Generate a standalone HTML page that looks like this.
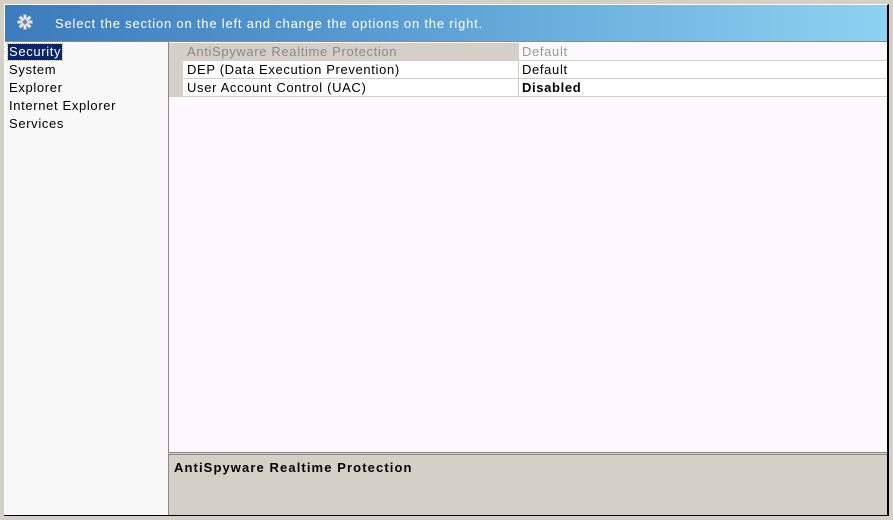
<!DOCTYPE html>
<html><head><meta charset="utf-8"><style>
*{margin:0;padding:0;box-sizing:border-box}
body{width:893px;height:520px;background:#d4d0c8;position:relative;overflow:hidden;font-family:"Liberation Sans","Noto Sans CJK JP",sans-serif;font-size:13px;color:#000;letter-spacing:0.65px}
.win{position:absolute;left:4px;top:4px;width:885px;height:512px;border-left:1px solid #fff;border-top:1px solid #fff;border-right:2px solid #000;border-bottom:2px solid #000;background:#f8f8f8}
.hdr{position:absolute;left:0;top:0;width:882px;height:37px;background:linear-gradient(90deg,#3c7bbd 0%,#5a9ed4 45%,#8ed2f1 100%);border-bottom:1px solid #8a8a8a}
.hdr span{position:absolute;left:50px;top:11px;color:#fff;font-size:13px;letter-spacing:0.8px}
.list{position:absolute;left:0;top:37px;width:163px;height:473px;background:#f8f8f8}
.list div{position:absolute;left:4px;height:16px;line-height:16px}
.sel{background:#0a246a;color:#fff;outline:1px dotted #c8b060;padding:0 1px;left:3px!important}
.right{position:absolute;left:163px;top:37px;width:719px;height:411px;background:#fcf9fc;border-left:1px solid #8a8a8a}
.gut{position:absolute;left:0;top:1px;width:14px;height:54px;background:#d4d0c8}
.row{position:absolute;left:14px;width:704px;height:18px;border-bottom:1px solid #d4d0c8;line-height:17px}
.row .l{position:absolute;left:4px}
.row .v{position:absolute;left:335px;top:0;height:17px;border-left:1px solid #d4d0c8;padding-left:3px;width:369px;background:#fff}
.desc{position:absolute;left:163px;top:447px;width:719px;height:63px;background:#d4d0c8;border-left:1px solid #8a8a8a;border-top:3px double #8a8a8a}
.desc b{position:absolute;left:5px;top:5px;font-size:13px;letter-spacing:1.1px}
</style></head><body>
<div class="win">
<div class="hdr">
<svg style="position:absolute;left:12px;top:9px" width="16" height="16" viewBox="0 0 16 16"><g fill="#e8e8ee" stroke="#9aa" stroke-width="0.5"><circle cx="8" cy="8" r="5"/><rect x="6.5" y="0.5" width="3" height="15"/><rect x="0.5" y="6.5" width="15" height="3"/><rect x="6.5" y="0.5" width="3" height="15" transform="rotate(45 8 8)"/><rect x="6.5" y="0.5" width="3" height="15" transform="rotate(-45 8 8)"/></g><circle cx="8" cy="8" r="2.2" fill="#6a8ab0"/></svg>
<span>Select the section on the left and change the options on the right.</span></div>
<div class="list">
<div class="sel" style="top:2px">Security</div>
<div style="top:20px">System</div>
<div style="top:38px">Explorer</div>
<div style="top:56px">Internet Explorer</div>
<div style="top:74px">Services</div>
</div>
<div class="right">
<div class="gut"></div>
<div class="row" style="top:1px;background:#d4d0c8;color:#8a8a8a"><span class="l">AntiSpyware Realtime Protection</span><span class="v" style="background:#fcf9fc;color:#999">Default</span></div>
<div class="row" style="top:19px;background:#fff"><span class="l">DEP (Data Execution Prevention)</span><span class="v">Default</span></div>
<div class="row" style="top:37px;background:#fff"><span class="l">User Account Control (UAC)</span><span class="v"><b>Disabled</b></span></div>
</div>
<div class="desc"><b>AntiSpyware Realtime Protection</b></div>
</div>
</body></html>
